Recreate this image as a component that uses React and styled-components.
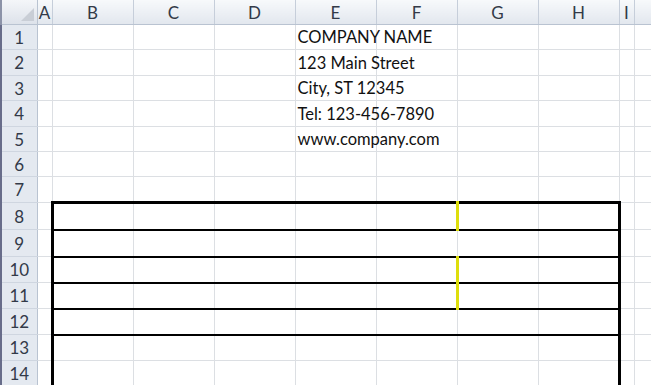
import React from 'react'
import styled, { createGlobalStyle } from 'styled-components'

const GlobalStyle = createGlobalStyle`
  html, body {
    margin: 0;
    padding: 0;
    background: #fff;
    overflow: hidden;
  }
`

const Sheet = styled.table`
  border-collapse: collapse;
  table-layout: fixed;
  width: 651px;
  font-family: Lato, "Liberation Sans", sans-serif;
`

const Corner = styled.th`
  position: relative;
  height: 24px;
  padding: 0;
  background: linear-gradient(#f4f6f9, #dde2ea);
  border-right: 1px solid #b9c3d1;
  border-bottom: 1px solid #b9c3d1;
  border-left: 2px solid #8c93a8;
`

const Triangle = styled.span`
  position: absolute;
  right: 3px;
  bottom: 3px;
  width: 0;
  height: 0;
  border-left: 13px solid transparent;
  border-bottom: 13px solid #c9ced6;
`

const ColHead = styled.th`
  height: 24px;
  padding: 0;
  background: linear-gradient(#f7f9fb, #e2e7ee);
  border-right: 1px solid #c6ceda;
  border-bottom: 1px solid #b9c3d1;
  color: #333a48;
  font-weight: normal;
  font-size: 17px;
  text-align: center;
  overflow: hidden;
`

const RowHead = styled.th`
  padding: 0;
  background: #e4e9f0;
  border-left: 2px solid #686d8a;
  border-right: 1px solid #b9c3d1;
  border-bottom: 1px solid #cfd6e0;
  color: #333a48;
  font-weight: normal;
  font-size: 17px;
  text-align: center;
`

const Cell = styled.td`
  padding: 0 0 0 2px;
  white-space: nowrap;
  overflow: visible;
  font-size: 16.5px;
  color: #111;
  border: 1px solid #dcdfe3;
  ${(p) => p.$noRight && 'border-right: none;'}
  ${(p) => p.$top && `border-top: ${p.$top};`}
  ${(p) => p.$bottom && `border-bottom: ${p.$bottom};`}
  ${(p) => p.$left && `border-left: ${p.$left};`}
  ${(p) => p.$right && `border-right: ${p.$right};`}
`

const cols = ['A', 'B', 'C', 'D', 'E', 'F', 'G', 'H', 'I', '']
const widths = [15, 81, 81, 81, 81, 81, 81, 81, 15, 18]
const heights = [25, 26, 25, 26, 25, 25, 26, 27, 27, 26, 26, 26, 26, 26]

const address = ['COMPANY NAME', '123 Main Street', 'City, ST 12345', 'Tel: 123-456-7890', 'www.company.com']

const THICK = '3px solid #000'
const LINE = '2px solid #000'
const YELLOW = '3px solid #dede0c'

// rows 8..14 boxed from column B to H
const boxBorders = (row, col) => {
  const b = {}
  if (row < 8 || col < 1 || col > 7) return b
  if (row === 8) b.$top = THICK
  if (row >= 8 && row <= 12) b.$bottom = LINE
  if (col === 1) b.$left = THICK
  if (col === 7) b.$right = THICK
  if (col === 5 && (row === 8 || row === 10 || row === 11)) b.$right = YELLOW
  return b
}

const App = () => {
  return (
    <>
      <GlobalStyle />
      <Sheet>
        <colgroup>
          <col style={{ width: 36 }} />
          {widths.map((w, i) => (
            <col key={i} style={{ width: w }} />
          ))}
        </colgroup>
        <thead>
          <tr>
            <Corner>
              <Triangle />
            </Corner>
            {cols.map((c, i) => (
              <ColHead key={i}>{c}</ColHead>
            ))}
          </tr>
        </thead>
        <tbody>
          {heights.map((h, r) => {
            const row = r + 1
            return (
              <tr key={row} style={{ height: h }}>
                <RowHead>{row}</RowHead>
                {cols.map((c, ci) => {
                  const text = ci === 4 && row <= 5 ? address[row - 1] : null
                  return (
                    <Cell key={ci} $noRight={!!text} {...boxBorders(row, ci)}>
                      {text}
                    </Cell>
                  )
                })}
              </tr>
            )
          })}
        </tbody>
      </Sheet>
    </>
  )
}

export default App
